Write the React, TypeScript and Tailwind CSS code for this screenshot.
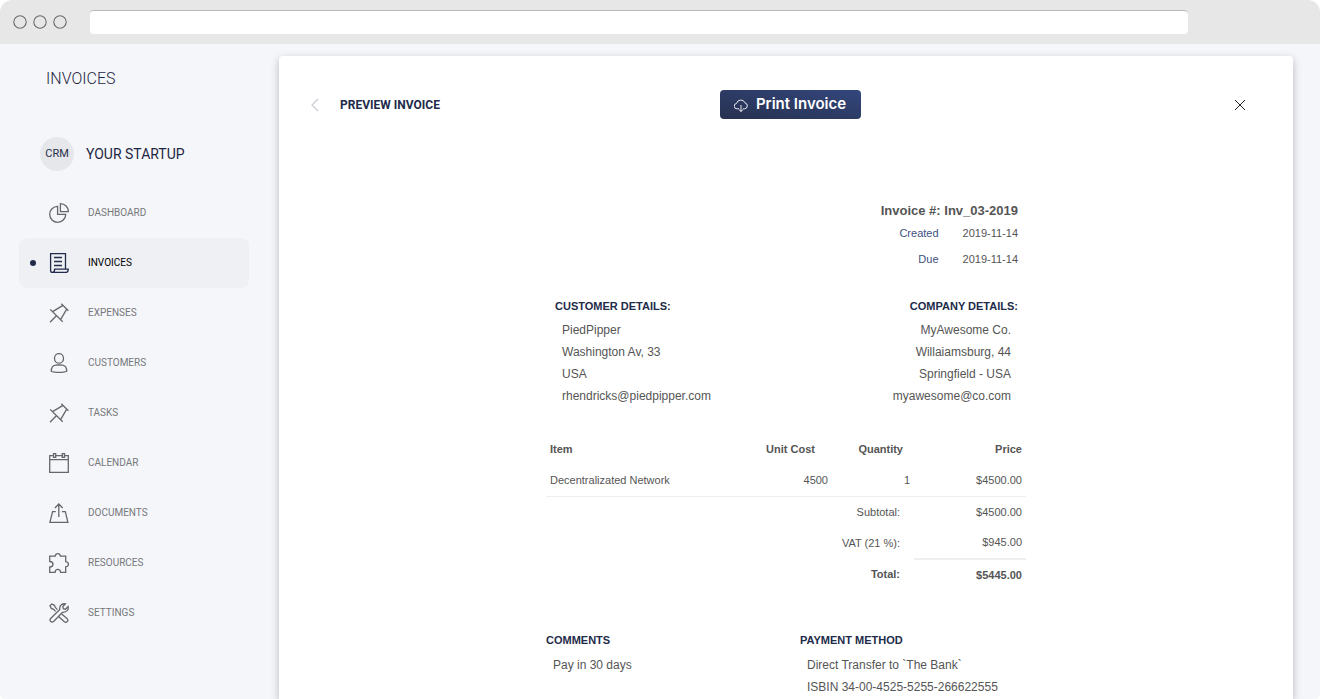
import React from "react";

type IconName =
  | "pie"
  | "receipt"
  | "pin"
  | "user"
  | "calendar"
  | "share"
  | "puzzle"
  | "tools";

const shapes: Record<IconName, React.ReactNode> = {
  pie: (
    <>
      <path d="M8.6 3.3A8 8 0 1 0 16.7 11.4H8.6Z" />
      <path d="M11.4.7A8 8 0 0 1 19.4 8.7H11.4Z" />
    </>
  ),
  receipt: (
    <>
      <path d="M16.5 16V.7H1.6V17.4Q1.6 19.3 3.4 19.3H17.2Q19.2 19.3 19.2 16.2H5.6Q5.6 19.3 3.6 19.3" />
      <path d="M5 4.5H13M5 8.5H13M5 12.5H13" />
    </>
  ),
  pin: (
    <>
      <path d="M12.3.7L19.4 7.8M1.2 6.4L13.7 18.8M3.6 8.6L14 2.4M11.6 16.6L17.7 6.1M1 19.2L7.1 13" />
    </>
  ),
  user: (
    <>
      <ellipse cx="10" cy="5.4" rx="4.5" ry="4.8" />
      <path d="M6.5 12.2C9 11.9 11 11.9 13.5 12.2C16.4 12.6 17.7 15.4 17.7 18.3C15 19.8 5 19.8 2.3 18.3C2.3 15.4 3.6 12.6 6.5 12.2Z" />
    </>
  ),
  calendar: (
    <>
      <path d="M4.4 2.7H.7V19.3H19.3V2.7H15.6M6.8 2.7H13.2M.7 6.6H19.3" />
      <path d="M4.5.7H6.7V4.4H4.5ZM13.3.7H15.5V4.4H13.3Z" />
    </>
  ),
  share: (
    <>
      <path d="M6.8 8.7H3.6L.9 19.3H18.9L16.3 8.7H12.9M9.8 14V1M5.9 5L9.8 1L13.7 5" />
    </>
  ),
  puzzle: (
    <path d="M.7 3.2H6.2Q6.5.7 8.8.7T11.4 3.2H16.7V8.6Q19.4 8.8 19.4 11.2T16.7 13.8V19.3H11.6Q11.4 16.4 8.8 16.4T6.1 19.3H.7V14Q4 13.8 4 11.2T.7 8.5Z" />
  ),
  tools: (
    <>
      <path d="M1.6 15.5L10.8 6.5Q10.2 3.4 12.6 1.6Q14.3.4 16.4.9L13.8 3.5L14.3 5.7L16.5 6.2L19.1 3.6Q19.7 5.8 18.4 7.4Q16.4 9.6 13.6 9.3L4.6 18.4Q3 19.6 1.6 18.4Q.4 17 1.6 15.5Z" />
      <path d="M8.4 6.6L6.3 4.5L5.4 2.3L2.8 1L1 2.8L2.3 5.4L4.5 6.3L6.6 8.4M12.6 11L18 15.6Q19.6 17.2 18.2 18.6Q16.8 20 15.1 18.6L9.6 13.6" />
    </>
  ),
};

function NavIcon({ name }: { name: IconName }) {
  return (
    <svg
      viewBox="0 0 20 20"
      className="size-5 shrink-0"
      fill="none"
      stroke="currentColor"
      strokeWidth="1.3"
      aria-hidden="true"
    >
      {shapes[name]}
    </svg>
  );
}

const navItems: { label: string; icon: IconName; active?: boolean }[] = [
  { label: "DASHBOARD", icon: "pie" },
  { label: "INVOICES", icon: "receipt", active: true },
  { label: "EXPENSES", icon: "pin" },
  { label: "CUSTOMERS", icon: "user" },
  { label: "TASKS", icon: "pin" },
  { label: "CALENDAR", icon: "calendar" },
  { label: "DOCUMENTS", icon: "share" },
  { label: "RESOURCES", icon: "puzzle" },
  { label: "SETTINGS", icon: "tools" },
];

function BrowserBar() {
  return (
    <header className="flex h-11 shrink-0 items-center rounded-t-xl bg-[#e7e7e7] pl-[13px] pr-[132px]">
      <div className="flex gap-1.5">
        {[0, 1, 2].map((i) => (
          <svg key={i} viewBox="0 0 14 14" className="size-3.5" aria-hidden="true">
            <circle cx="7" cy="7" r="6.2" fill="none" stroke="#6a6a6a" strokeWidth="1.1" />
          </svg>
        ))}
      </div>
      <input
        aria-label="Address"
        className="ml-[23px] h-6 min-w-0 flex-1 rounded border-t border-[#b9b9b9] bg-white px-2 text-xs outline-none"
      />
    </header>
  );
}

function Sidebar() {
  return (
    <aside className="w-[279px] shrink-0 pl-[19px] pr-[30px] font-['Roboto',sans-serif]">
      <h1 className="pl-[27px] pt-[23px] text-base leading-6 font-light text-[#1f2742]">INVOICES</h1>
      <div className="mt-[46px] flex items-center gap-3 pl-[21px]">
        <span className="flex size-[34px] items-center justify-center rounded-full bg-[#e6e7ea] text-[11px] text-[#29304a]">
          CRM
        </span>
        <span className="text-sm text-[#1f2742]">YOUR STARTUP</span>
      </div>
      <nav className="mt-[17px]">
        <ul>
          {navItems.map((item) => (
            <li key={item.label}>
              <a
                href="#"
                aria-current={item.active ? "page" : undefined}
                className={
                  item.active
                    ? "flex h-[50px] items-center rounded-lg bg-[#eff0f4] pl-[11px] text-[#222b4a]"
                    : "flex h-[50px] items-center rounded-lg pl-[11px] text-[#666769]"
                }
              >
                <span
                  className={
                    item.active
                      ? "mr-[13px] size-1.5 rounded-full bg-[#222b4a]"
                      : "mr-[13px] size-1.5 rounded-full"
                  }
                />
                <NavIcon name={item.icon} />
                <span
                  className={
                    item.active
                      ? "ml-[19px] text-[10px] leading-4 text-black"
                      : "ml-[19px] text-[10px] leading-4 text-[#77787b]"
                  }
                >
                  {item.label}
                </span>
              </a>
            </li>
          ))}
        </ul>
      </nav>
    </aside>
  );
}

function CardHeader() {
  return (
    <div className="grid grid-cols-[1fr_auto_1fr] items-center pl-8 pr-6">
      <div className="flex items-center">
        <button type="button" aria-label="Back" className="h-6 w-[29px] text-[#c9ccd2]">
          <svg viewBox="0 0 8 14" className="h-3.5 w-2" fill="none" stroke="currentColor" strokeWidth="1.2">
            <path d="M7 1L1 7L7 13" />
          </svg>
        </button>
        <h2 className="font-['Roboto',sans-serif] text-xs font-bold text-[#222b4a]">PREVIEW INVOICE</h2>
      </div>
      <button
        type="button"
        className="flex h-[29px] w-[141px] items-center justify-center gap-2 rounded bg-linear-to-tr from-[#27314f] to-[#33467d] font-['Inter',sans-serif] text-[15px] font-semibold text-white"
      >
        <svg viewBox="0 0 14 14" className="size-3.5 shrink-0" fill="none" stroke="currentColor" strokeWidth="0.9" aria-hidden="true">
          <path d="M5 10.8H3.3A2.7 2.7 0 0 1 2.6 5.4A4.4 4.4 0 0 1 11 4.9A3 3 0 0 1 10.7 10.8H9M7 7V13.4M4.9 11.5L7 13.5L9.1 11.5" />
        </svg>
        Print Invoice
      </button>
      <button type="button" aria-label="Close" className="justify-self-end px-[23px] text-[#222]">
        <svg viewBox="0 0 12 12" className="size-3" fill="none" stroke="currentColor" strokeWidth="1">
          <path d="M1 1L11 11M11 1L1 11" />
        </svg>
      </button>
    </div>
  );
}

const heading = "text-[11px] leading-4 font-bold text-[#222b4a]";

function InvoiceSheet() {
  return (
    <article className="mx-auto mt-[83px] w-[480px] max-w-full font-['Liberation_Sans',Arial,sans-serif] text-[11px] text-[#555]">
      <div className="flex flex-col items-end pr-2">
        <h3 className="text-[13px] leading-[18px] font-bold">Invoice #: Inv_03-2019</h3>
        <dl className="grid grid-cols-[auto_auto] gap-x-6 text-right leading-[26px]">
          <dt className="text-[#3d4f80]">Created</dt>
          <dd>2019-11-14</dd>
          <dt className="text-[#3d4f80]">Due</dt>
          <dd>2019-11-14</dd>
        </dl>
      </div>

      <div className="mt-[26px] flex justify-between pl-[9px] pr-2">
        <section>
          <h4 className={heading}>CUSTOMER DETAILS:</h4>
          <address className="mt-[5px] pl-[7px] text-xs leading-[22px] not-italic">
            PiedPipper
            <br />
            Washington Av, 33
            <br />
            USA
            <br />
            rhendricks@piedpipper.com
          </address>
        </section>
        <section className="text-right">
          <h4 className={heading}>COMPANY DETAILS:</h4>
          <address className="mt-[5px] pr-[7px] text-xs leading-[22px] not-italic">
            MyAwesome Co.
            <br />
            Willaiamsburg, 44
            <br />
            Springfield - USA
            <br />
            myawesome@co.com
          </address>
        </section>
      </div>

      <table className="mt-[26px] w-full table-fixed border-collapse text-right">
        <colgroup>
          <col />
          <col className="w-[82px]" />
          <col className="w-[82px]" />
          <col className="w-[112px]" />
        </colgroup>
        <thead>
          <tr className="h-8">
            <th className="pl-1 text-left">Item</th>
            <th className="pr-[17px]">Unit Cost</th>
            <th className="pr-[11px]">Quantity</th>
            <th className="pr-1">Price</th>
          </tr>
        </thead>
        <tbody>
          <tr className="h-[31px] border-b border-[#eee]">
            <td className="pl-1 text-left">Decentralizated Network</td>
            <td className="pr-1">4500</td>
            <td className="pr-1">1</td>
            <td className="pr-1">$4500.00</td>
          </tr>
        </tbody>
        <tfoot>
          <tr className="h-[31px]">
            <td colSpan={3} className="pr-3.5">Subtotal:</td>
            <td className="pr-1">$4500.00</td>
          </tr>
          <tr className="h-8">
            <td colSpan={3} className="pr-3.5">VAT (21 %):</td>
            <td className="pr-1">$945.00</td>
          </tr>
          <tr className="h-[31px] font-bold">
            <td colSpan={3} className="pr-3.5">Total:</td>
            <td className="border-t-2 border-[#eee] pr-1">$5445.00</td>
          </tr>
        </tfoot>
      </table>

      <div className="mt-[42px] grid grid-cols-[254px_1fr]">
        <section>
          <h4 className={heading}>COMMENTS</h4>
          <p className="mt-1.5 pl-[7px] text-xs leading-[22px]">Pay in 30 days</p>
        </section>
        <section>
          <h4 className={heading}>PAYMENT METHOD</h4>
          <p className="mt-1.5 pl-[7px] text-xs leading-[22px]">
            Direct Transfer to `The Bank`
            <br />
            ISBIN 34-00-4525-5255-266622555
          </p>
        </section>
      </div>
    </article>
  );
}

export default function App() {
  return (
    <div className="flex min-h-screen flex-col overflow-hidden rounded-b-md rounded-t-xl bg-[#f4f6fa]">
      <BrowserBar />
      <div className="flex flex-1">
        <Sidebar />
        <main className="mr-[27px] mt-3 min-w-0 flex-1 rounded-t bg-white pt-[34px] shadow-[0_3px_8px_rgba(0,0,0,0.25)]">
          <CardHeader />
          <InvoiceSheet />
        </main>
      </div>
    </div>
  );
}
